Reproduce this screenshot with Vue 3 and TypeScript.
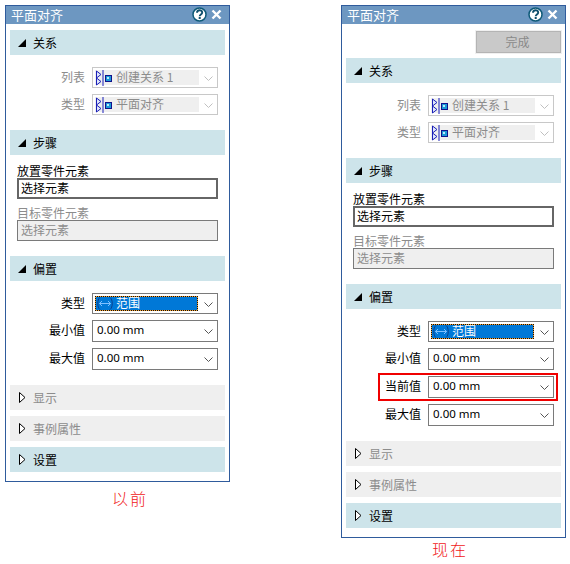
<script setup lang="ts">
interface Panel {
  id: string;
  caption: string;
  hasDone: boolean;
  offsets: string[];
}

const panels: Panel[] = [
  { id: "before", caption: "以前", hasDone: false, offsets: ["最小值", "最大值"] },
  { id: "after", caption: "现在", hasDone: true, offsets: ["最小值", "当前值", "最大值"] },
];

const relationRows = [
  { label: "列表", value: "创建关系 1" },
  { label: "类型", value: "平面对齐" },
];
</script>

<template>
  <div class="page">
    <div v-for="panel in panels" :key="panel.id" class="column" :class="panel.id">
      <div class="panel">
        <div class="titlebar">
          <span class="title">平面对齐</span>
          <svg class="help" width="15" height="15" viewBox="0 0 15 15">
            <circle cx="7.5" cy="7.5" r="6.5" fill="#fff" stroke="#0f5a78" stroke-width="1.5" />
            <path d="M5 5.700c0-3.200 5.200-3.200 5.200-.2 0 1.900-2.500 1.900-2.500 3.700" fill="none" stroke="#0f4f6c" stroke-width="1.900" />
            <rect x="6.700" y="10" width="2" height="2" fill="#0f4f6c" />
          </svg>
          <svg class="close" width="11" height="11" viewBox="0 0 11 11">
            <path d="M1.500 1.500l8 8M9.500 1.500l-8 8" stroke="#fff" stroke-width="2.400" fill="none" />
          </svg>
        </div>

        <div class="body">
          <div v-if="panel.hasDone" class="done-row">
            <button class="done">完成</button>
          </div>

          <div class="head">
            <svg class="arrow" width="8" height="8" viewBox="0 0 8 8"><path d="M8 0v8H0z" fill="#000" /></svg>
            关系
          </div>
          <div class="rows">
            <div v-for="row in relationRows" :key="row.label" class="row">
              <span class="label muted">{{ row.label }}</span>
              <div class="select disabled">
                <div class="inner">
                  <svg class="mate" width="16" height="16" viewBox="0 0 16 16">
                    <path d="M.5 1l4.500 3.500L.5 8 5 11.500.5 15z" fill="#dfe6fb" stroke="#1a1fb8" />
                    <path d="M7 0v16" stroke="#1a1fb8" />
                    <rect x="9.500" y="5.500" width="6" height="6" fill="#1b9ad6" stroke="#12128c" />
                    <rect x="11" y="7" width="2" height="2" fill="#bfe8fa" />
                  </svg>
                  <span class="text">{{ row.value }}</span>
                </div>
                <svg class="chevron" width="9" height="5" viewBox="0 0 9 5"><path d="M.5.500l4 4 4-4" fill="none" stroke="#c0c0c0" /></svg>
              </div>
            </div>
          </div>

          <div class="head">
            <svg class="arrow" width="8" height="8" viewBox="0 0 8 8"><path d="M8 0v8H0z" fill="#000" /></svg>
            步骤
          </div>
          <div class="steps">
            <div class="step-label">放置零件元素</div>
            <div class="field active">选择元素</div>
            <div class="step-label muted second">目标零件元素</div>
            <div class="field inactive">选择元素</div>
          </div>

          <div class="head">
            <svg class="arrow" width="8" height="8" viewBox="0 0 8 8"><path d="M8 0v8H0z" fill="#000" /></svg>
            偏置
          </div>
          <div class="rows">
            <div class="row">
              <span class="label">类型</span>
              <div class="select">
                <div class="inner highlighted">
                  <svg class="range" width="18" height="13" viewBox="0 0 18 13">
                    <path d="M4 .5C1 2.500 1 10.500 4 12.500M14 .5c3 2 3 10 0 12" fill="none" stroke="#0c3f8c" />
                    <path d="M3.500 6.500h11M6 4L3.500 6.500 6 9M12 4l2.500 2.500L12 9" fill="none" stroke="#7fc0ff" />
                  </svg>
                  <span class="text">范围</span>
                </div>
                <svg class="chevron" width="9" height="5" viewBox="0 0 9 5"><path d="M.5.500l4 4 4-4" fill="none" stroke="#555" /></svg>
              </div>
            </div>
            <div v-for="name in panel.offsets" :key="name" class="row tall">
              <span class="label">{{ name }}</span>
              <div class="select value">
                0.00 mm
                <svg class="chevron" width="9" height="5" viewBox="0 0 9 5"><path d="M.5.500l4 4 4-4" fill="none" stroke="#555" /></svg>
              </div>
              <div v-if="name === '当前值'" class="mark"></div>
            </div>
          </div>

          <div class="head closed">
            <svg class="arrow open" width="7" height="11" viewBox="0 0 7 11"><path d="M.5.500l5.500 5-5.500 5z" fill="#fff" stroke="#000" /></svg>
            显示
          </div>
          <div class="head closed next">
            <svg class="arrow open" width="7" height="11" viewBox="0 0 7 11"><path d="M.5.500l5.500 5-5.500 5z" fill="#fff" stroke="#000" /></svg>
            事例属性
          </div>
          <div class="head next">
            <svg class="arrow open" width="7" height="11" viewBox="0 0 7 11"><path d="M.5.500l5.500 5-5.500 5z" fill="#fff" stroke="#000" /></svg>
            设置
          </div>
        </div>
      </div>
      <div class="caption">{{ panel.caption }}</div>
    </div>
  </div>
</template>

<style scoped>
.page {
  display: flex;
  gap: 111px;
  padding: 5px 0 0 5px;
  font-family: "Noto Sans CJK SC", "Noto Sans", sans-serif;
  font-size: 12px;
  color: #000;
}

.column {
  width: 225px;
}

.panel {
  border: 1px solid #2f5b9c;
  background: #fff;
}

.titlebar {
  display: flex;
  align-items: center;
  height: 18px;
  padding: 0 7px 1px 5px;
  box-sizing: border-box;
  background: #6d97c1;
  color: #fff;
}

.title {
  flex: 1;
  font-size: 13px;
  line-height: 17px;
}

.help {
  margin-right: 4px;
}

.body {
  padding: 6px 4px 9px;
}

.done-row {
  display: flex;
  justify-content: flex-end;
  margin-bottom: 4px;
}

.done {
  box-sizing: border-box;
  width: 87px;
  height: 24px;
  margin-right: -1px;
  padding: 0 2px 2px 0;
  border: 2px solid #f0f0f0;
  outline: 1px solid #b4b4b4;
  outline-offset: -2px;
  background: #c9c9c9;
  color: #8a8a8a;
  font-family: inherit;
  font-size: 12px;
}

.head {
  display: flex;
  align-items: center;
  height: 25px;
  padding-left: 8px;
  background: #cde4ea;
  line-height: 25px;
}

.head.closed {
  background: #efefef;
  color: #8c8c8c;
}

.head.next {
  margin-top: 6px;
}

.arrow {
  width: 8px;
  margin-right: 7px;
}

.arrow.open {
  width: 7px;
  margin: 0 7px 0 1px;
}

.rows {
  display: flex;
  flex-direction: column;
  gap: 6px;
  padding: 12px 0 15px;
}

.row {
  position: relative;
  display: flex;
  align-items: center;
  justify-content: flex-end;
  height: 21px;
  padding-right: 7px;
}

.row.tall {
  height: 22px;
}

.label {
  margin: 0 7px 2px 0;
  line-height: 20px;
}

.muted {
  color: #8c8c8c;
}

.select {
  position: relative;
  display: flex;
  align-items: center;
  box-sizing: border-box;
  width: 126px;
  height: 100%;
  padding: 2px;
  border: 1px solid #7a7a7a;
  background: #fff;
}

.select.disabled {
  border-color: #c8c8c8;
  color: #8c8c8c;
}

.select.value {
  padding: 0 2px 4px 4px;
  font-family: "Noto Sans", sans-serif;
  font-size: 11.5px;
}

.inner {
  display: flex;
  align-items: center;
  box-sizing: border-box;
  width: 104px;
  height: 100%;
  background: #efefef;
  white-space: nowrap;
}

.inner .text {
  margin-bottom: 2px;
}

.inner.highlighted {
  width: 103px;
  border: 1px dotted #101010;
  background: linear-gradient(#0078d7, #0078d7) padding-box, #f5a030 border-box;
  color: #fff;
}

.mate {
  margin: 0 4px 0 1px;
  flex: none;
}

.range {
  margin: 0 2px 0 0;
  flex: none;
}

.chevron {
  position: absolute;
  right: 4px;
  top: 50%;
  margin-top: -2px;
}

.mark {
  position: absolute;
  left: 32px;
  right: 3px;
  top: -3px;
  bottom: -3px;
  border: 2px solid #f00000;
}

.steps {
  padding: 10px 7px 15px;
}

.step-label {
  height: 13px;
  line-height: 12px;
}

.step-label.second {
  margin-top: 8px;
}

.field {
  box-sizing: border-box;
  height: 21px;
  padding-left: 3px;
  line-height: 17px;
}

.field.active {
  border: 2px solid #666;
  padding-left: 2px;
  line-height: 15px;
}

.field.inactive {
  border: 1px solid #7a7a7a;
  background: #efefef;
  color: #8c8c8c;
}

.caption {
  color: #f01818;
  font-size: 16px;
  font-weight: 300;
  line-height: 18px;
  letter-spacing: 2px;
}

.before .caption {
  margin: 7px 0 0 107px;
}

.after .caption {
  margin: 2px 0 0 91px;
}
</style>
